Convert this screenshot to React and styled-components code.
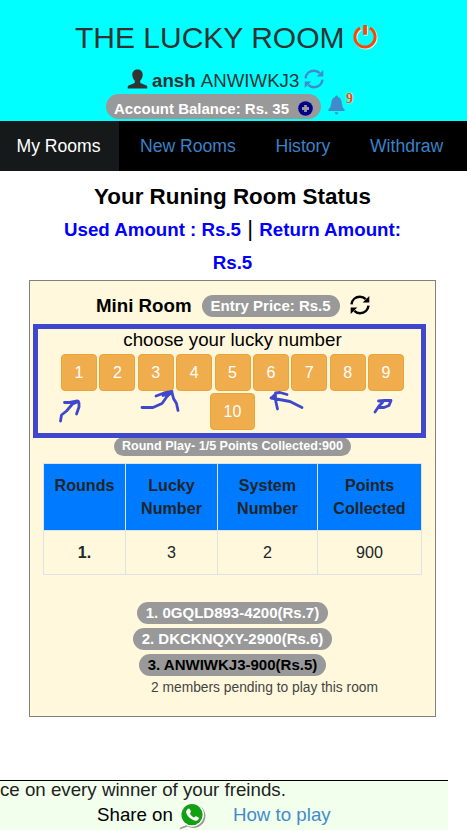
import React from "react";
import styled, { createGlobalStyle } from "styled-components";

const Global = createGlobalStyle`
  * { box-sizing: border-box; }
  html, body { margin: 0; padding: 0; background: #fff; overflow: hidden; }
  body { font-family: "Liberation Sans", Arial, sans-serif; font-size: 18.72px; color: #000; }
`;

const Page = styled.div`
  width: 467px;
  height: 831px;
  display: flex;
  flex-direction: column;
  overflow: hidden;
`;

const Header = styled.header`
  height: 121px;
  flex: none;
  background: #00ffff;
  color: #333;
  display: flex;
  flex-direction: column;
  padding-top: 20px;
`;

const Title = styled.h1`
  margin: 0;
  height: 35px;
  padding-left: 75px;
  display: flex;
  align-items: center;
  font-size: 30px;
  font-weight: 400;
  line-height: 35px;
  white-space: nowrap;
  svg { margin: -2px 0 0 7px; }
`;

const UserRow = styled.div`
  margin-top: 13px;
  height: 25px;
  padding-left: 127px;
  display: flex;
  align-items: center;
  font-size: 18.72px;
  line-height: 25px;
  white-space: nowrap;
  svg { margin-bottom: 4px; }
  b { margin: 0 5px 0 4px; }
  svg:last-child { margin-left: 5px; }
`;

const BalanceRow = styled.div`
  margin-top: 1px;
  padding-left: 106px;
  display: flex;
  align-items: flex-start;
`;

const BalancePill = styled.div`
  width: 215px;
  height: 25px;
  border-radius: 13px;
  padding: 3px 8px 0 8px;
  background: #999;
  color: #fff;
  display: flex;
  align-items: center;
  justify-content: space-between;
  font-size: 15px;
  font-weight: 700;
  white-space: nowrap;
`;

const Bell = styled.div`
  display: flex;
  margin: 1px 0 0 7px;
`;

const Count = styled.span`
  margin: -3px 0 0 1px;
  color: #ff4500;
  font: 700 14px/14px "Liberation Serif", serif;
  text-shadow: 0 0 2px #fff;
`;

const Tabs = styled.nav`
  height: 50px;
  flex: none;
  display: flex;
  background: #000;
  font-size: 17.6px;
  line-height: 50px;
  white-space: nowrap;
`;

const Tab = styled.a`
  width: ${(p) => p.$w}px;
  padding-left: ${(p) => p.$pad}px;
  color: ${(p) => (p.$active ? "#fff" : "#3a82c8")};
  background: ${(p) => (p.$active ? "#15191a" : "transparent")};
`;

const Status = styled.section`
  height: 109px;
  flex: none;
  padding: 10px 0 0 29px;
  width: 436px;
  text-align: center;
  font-weight: 700;
  font-size: 22.4px;
  line-height: 32px;
`;

const Amount = styled.span`
  color: #0000ff;
  font-size: 18.72px;
`;

const Bar = styled.span`
  font-weight: 400;
`;

const Card = styled.main`
  width: 407px;
  height: 437px;
  flex: none;
  margin-left: 29px;
  border: 1px solid #808080;
  background: #fff8dc;
  display: flex;
  flex-direction: column;
`;

const RoomHead = styled.div`
  height: 43px;
  padding: 8px 0 2px 66px;
  display: flex;
  align-items: center;
  gap: 10px;
  line-height: 25px;
  white-space: nowrap;
  svg { margin-top: -2px; }
`;

const Pill = styled.div`
  height: ${(p) => (p.$small ? 19 : 22)}px;
  width: ${(p) => p.$w}px;
  line-height: ${(p) => (p.$small ? 19 : 22)}px;
  font-size: ${(p) => (p.$small ? 12.56 : 15)}px;
  border-radius: 11px;
  background: #999;
  color: ${(p) => (p.$dark ? "#000" : "#fff")};
  font-weight: 700;
  text-align: center;
  white-space: nowrap;
  flex: none;
`;

const Chooser = styled.div`
  position: relative;
  z-index: 1;
  width: 393px;
  height: 114px;
  margin-left: 3px;
  border: 5px solid #3f48cc;
  display: flex;
  flex-direction: column;
  align-items: center;
  padding-left: 6px;
  flex: none;
`;

const Prompt = styled.div`
  height: 25px;
  line-height: 22px;
`;

const Numbers = styled.div`
  display: flex;
  justify-content: center;
  gap: 2.4px;
  margin-bottom: 2px;
`;

const NumberButton = styled.button`
  width: ${(p) => p.$w}px;
  height: 37px;
  padding: 0;
  border: 1px solid #eea236;
  border-radius: 4px;
  background: #f0ad4e;
  color: #fff;
  font: 16px/34px "Liberation Sans", Arial, sans-serif;
`;

const Ink = styled.svg`
  position: absolute;
  left: -5px;
  top: -5px;
  fill: none;
  stroke: #3f48cc;
  stroke-width: 2.8;
  stroke-linecap: round;
  stroke-linejoin: round;
`;

const RoundInfo = styled.div`
  margin: -1px 0 0 84px;
`;

const Table = styled.table`
  width: 379px;
  height: 112px;
  margin: 7px 0 0 13px;
  flex: none;
  table-layout: fixed;
  border-collapse: collapse;
  font-size: 16.1px;
  line-height: 23px;
  color: #212529;
  text-align: center;
  th, td { border: 1px solid #dee2e6; padding: 0; }
  td, tbody th { height: 44px; }
`;

const HeadCell = styled.th`
  width: ${(p) => p.$w}px;
  height: 67px;
  background: #007bff;
  vertical-align: top;
  div { padding-top: 10px; }
`;

const Players = styled.div`
  margin-top: 27px;
  display: flex;
  flex-direction: column;
  align-items: center;
  gap: 4px;
`;

const Pending = styled.div`
  margin: 1px 0 0 121px;
  font-size: 13.8px;
  line-height: 21px;
  color: #444;
  white-space: nowrap;
`;

const Footer = styled.footer`
  width: 448px;
  height: 50px;
  margin-top: 63px;
  flex: none;
  border-top: 1px solid #000;
  background: #f2ffed;
  overflow: hidden;
  white-space: nowrap;
`;

const Ticker = styled.div`
  height: 20px;
  line-height: 17px;
  color: #222;
`;

const ShareRow = styled.div`
  height: 29px;
  padding-left: 97px;
  display: flex;
  align-items: center;
  line-height: 25px;
  span, a { padding-bottom: 2px; }
  svg { margin: 0 27px 0 6px; flex: none; }
  a { color: #428bca; }
`;

const Refresh = ({ color, size = 20 }) => (
  <svg width={size} height={size} viewBox="0 0 20 20">
    <g fill="none" stroke={color} strokeWidth="2.5">
      <path d="M1.5 9.4C2 4.8 5.5 1.8 10 1.8c2.4 0 4.2.8 5.7 2.3" />
      <path d="M18.5 10.6c-.5 4.6-4 7.6-8.5 7.6-2.4 0-4.2-.8-5.7-2.3" />
    </g>
    <path fill={color} d="M19.3.9v6.600h-6.600zM.7 19.1v-6.600h6.600z" />
  </svg>
);

const Power = () => (
  <svg width="27" height="28" viewBox="0 0 27 28">
    <g fill="none" stroke="#fff" strokeOpacity=".75" strokeWidth="3.2" transform="translate(.9 .9)">
      <path d="M8.2 5.1a10.1 10.1 0 1 0 9.6 0" />
      <path d="M13 2v9.8" strokeWidth="3.8" />
    </g>
    <g fill="none" stroke="#ff4500">
      <path d="M8.2 5.1a10.1 10.1 0 1 0 9.6 0" strokeWidth="3" />
      <path d="M13 2v9.8" strokeWidth="3.8" />
    </g>
  </svg>
);

const Person = () => (
  <svg width="21" height="20" viewBox="0 0 21 20">
    <path fill="#333" d="M10.5.5c3.200 0 5.200 2 5.200 5.200 0 2.300-1 4.600-2.500 6v1.300c0 .8.5 1.200 1.300 1.500l4.300 1.700c1 .4 1.500 1 1.500 1.800v1.500H.7v-1.500c0-.8.5-1.400 1.500-1.800l4.300-1.700c.8-.3 1.300-.7 1.300-1.500v-1.300c-1.500-1.400-2.500-3.700-2.500-6C5.300 2.500 7.300.5 10.500.5z" />
  </svg>
);

const Plus = () => (
  <svg width="15" height="15" viewBox="0 0 15 15">
    <circle cx="7.500" cy="7.500" r="7.300" fill="#00008b" />
    <path d="M7.500 4v7M4 7.500h7" stroke="#999" strokeWidth="2.800" />
  </svg>
);

const BellIcon = () => (
  <svg width="17" height="20" viewBox="0 0 17 20">
    <path fill="#428bca" d="M8.500.5c.9 0 1.400.6 1.400 1.500 2.200.7 3.200 2.300 3.600 4.500l1 5c.2 1 .8 1.800 2.100 2.900v1.500H.4v-1.500c1.300-1.100 1.900-1.900 2.100-2.900l1-5C3.900 4.300 4.900 2.700 7.100 2c0-.9.5-1.500 1.400-1.500zM6.800 17.200h3.400c-.2 1.400-.7 2.200-1.700 2.200s-1.500-.8-1.700-2.200z" />
  </svg>
);

const WhatsApp = () => (
  <svg width="27" height="28" viewBox="0 0 27 28">
    <path fill="#999" d="M14.500 2a12 12 0 1 1-5.700 22.600L.5 27.500l3-7.300A12 12 0 0 1 14.500 2z" />
    <path fill="#fff" d="M13 .8a12 12 0 1 1-5.800 22.500L.5 25.800l2-7A12 12 0 0 1 13 .8z" />
    <circle cx="13" cy="12.700" r="10.600" fill="#12a012" />
    <path fill="#fff" d="M8.400 7.200c1-1.100 2-1 2.500.1l1 2.200c.3.700-.9 1.500-.9 2 .7 1.800 2.100 3.100 4 3.900.6.100 1.400-1.500 2.100-1.200l2.200 1.100c.9.500.6 1.600-.2 2.500-1.100 1.200-3.100 1.100-5.400 0-3-1.400-5-3.500-6.200-6.300-.7-1.800-.2-3.200.9-4.300z" />
  </svg>
);

const Doodles = () => (
  <Ink width="393" height="114" viewBox="33 324 393 114">
    <path d="M60.500 421l1-6 5-4 6-7 6-2.500M64.500 402.500l5 0 8-1.500 1.500 2v4l-2.500 7" />
    <path d="M142 407.500h11l9-4 5-7 5-4.500M156 396l8-3 8-1.500-9 4 9-3 1.500 6 3 5 1.500 7" />
    <path d="M302 407.500l-8-4-4-2-8-1.500-11-2M287 394.500l-7-2-4.500.5 0 7 2 9M271.500 398l5-5" />
    <path d="M375 412l4-6 4-4M378.500 401l6-.5h6.500l-2 5-5 2-5.500 0" />
  </Ink>
);

const players = [
  { text: "1. 0GQLD893-4200(Rs.7)", w: 191 },
  { text: "2. DKCKNQXY-2900(Rs.6)", w: 199 },
  { text: "3. ANWIWKJ3-900(Rs.5)", w: 187, dark: true },
];

export default function App() {
  return (
    <Page>
      <Global />
      <Header>
        <Title>THE LUCKY ROOM<Power /></Title>
        <UserRow>
          <Person /><b>ansh</b><span>ANWIWKJ3</span><Refresh color="#428bca" />
        </UserRow>
        <BalanceRow>
          <BalancePill>Account Balance: Rs. 35<Plus /></BalancePill>
          <Bell><BellIcon /><Count>9</Count></Bell>
        </BalanceRow>
      </Header>
      <Tabs>
        <Tab $active $w={119} $pad={16.5}>My Rooms</Tab>
        <Tab $w={136} $pad={21}>New Rooms</Tab>
        <Tab $w={95} $pad={20.5}>History</Tab>
        <Tab $w={117} $pad={20}>Withdraw</Tab>
      </Tabs>
      <Status>
        <div>Your Runing Room Status</div>
        <Amount>Used Amount : Rs.5</Amount> <Bar>|</Bar> <Amount>Return Amount:<br />Rs.5</Amount>
      </Status>
      <Card>
        <RoomHead>
          <b>Mini Room</b>
          <Pill $w={138}>Entry Price: Rs.5</Pill>
          <Refresh color="#000" />
        </RoomHead>
        <Chooser>
          <Prompt>choose your lucky number</Prompt>
          <Numbers>
            {[1, 2, 3, 4, 5, 6, 7, 8, 9].map((n) => (
              <NumberButton key={n} $w={36}>{n}</NumberButton>
            ))}
          </Numbers>
          <Numbers><NumberButton $w={45}>10</NumberButton></Numbers>
          <Doodles />
        </Chooser>
        <RoundInfo>
          <Pill $small $w={237}>Round Play- 1/5 Points Collected:900</Pill>
        </RoundInfo>
        <Table>
          <thead>
            <tr>
              <HeadCell $w={82}><div>Rounds</div></HeadCell>
              <HeadCell $w={92}><div>Lucky<br />Number</div></HeadCell>
              <HeadCell $w={100}><div>System<br />Number</div></HeadCell>
              <HeadCell $w={104}><div>Points<br />Collected</div></HeadCell>
            </tr>
          </thead>
          <tbody>
            <tr><th>1.</th><td>3</td><td>2</td><td>900</td></tr>
          </tbody>
        </Table>
        <Players>
          {players.map((p) => (
            <Pill key={p.text} $w={p.w} $dark={p.dark}>{p.text}</Pill>
          ))}
        </Players>
        <Pending>2 members pending to play this room</Pending>
      </Card>
      <Footer>
        <Ticker>ce on every winner of your freinds.</Ticker>
        <ShareRow><span>Share on</span><WhatsApp /><a>How to play</a></ShareRow>
      </Footer>
    </Page>
  );
}
